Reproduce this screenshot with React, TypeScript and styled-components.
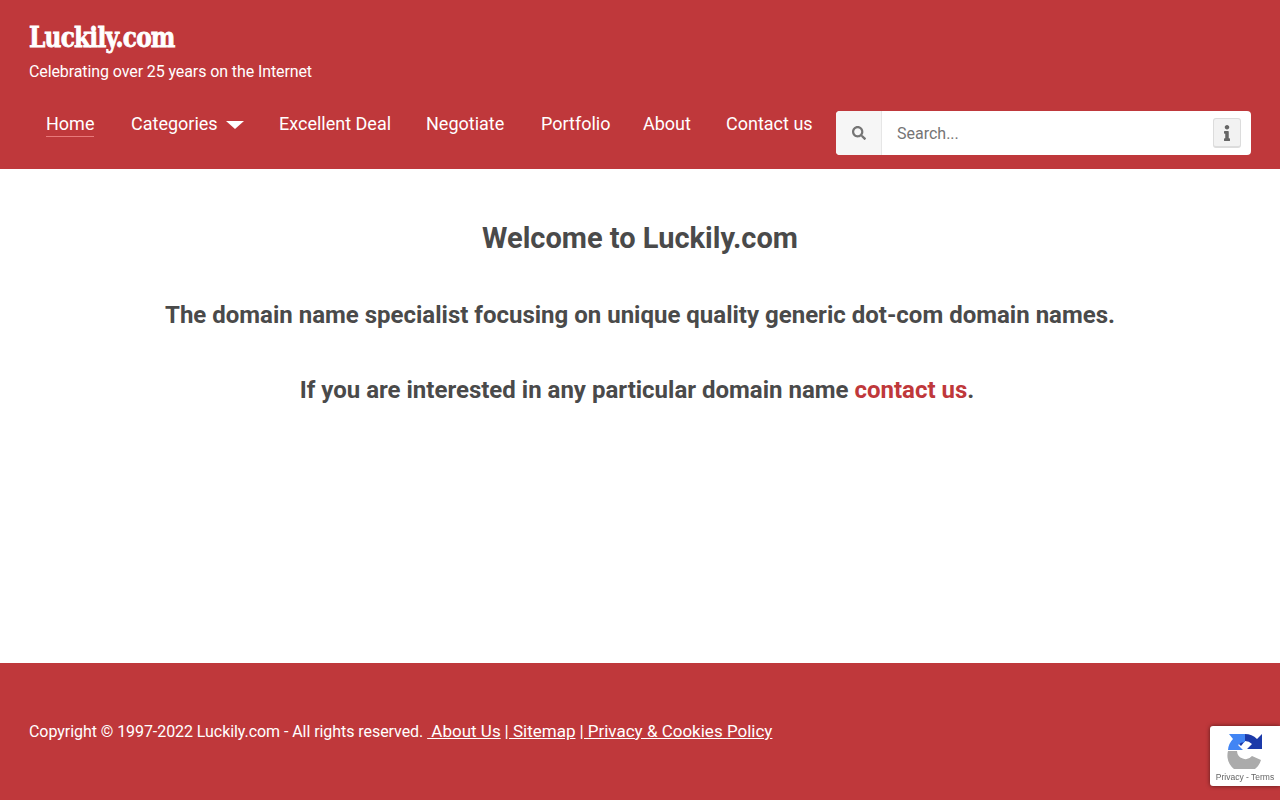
import React from 'react';
import styled, { createGlobalStyle } from 'styled-components';
import { FaSearch, FaInfo } from 'react-icons/fa';

const RED = '#bf383b';

const GlobalStyle = createGlobalStyle`
    html, body {
        margin: 0;
        padding: 0;
        background: #fff;
        font-family: Roboto, 'Liberation Sans', sans-serif;
    }
`;

const Page = styled.div`
    display: flex;
    flex-direction: column;
    height: 800px;
    overflow: hidden;
`;

const Header = styled.header`
    height: 169px;
    box-sizing: border-box;
    background: ${RED};
    color: #fff;
    padding: 20px 29px 0;
`;

const Logo = styled.div`
    font-family: 'DejaVu Serif', serif;
    font-weight: 700;
    font-size: 27px;
    line-height: 36px;
    width: 147px;
    white-space: nowrap;
    letter-spacing: -0.9px;
    -webkit-text-stroke: 0.8px #fff;
    transform: scaleX(0.86);
    transform-origin: left center;
`;

const Tagline = styled.div`
    font-size: 16px;
    line-height: 24px;
    margin-top: 4px;
    letter-spacing: -0.1px;
`;

const NavRow = styled.div`
    display: flex;
    align-items: flex-start;
    margin-top: 17px;
`;

const Nav = styled.nav`
    display: flex;
    width: 807px;
    padding: 11px 0 0 17px;
    box-sizing: border-box;
`;

const NavItem = styled.a<{ $width: number; $active?: boolean }>`
    display: flex;
    align-items: center;
    width: ${p => p.$width}px;
    font-size: 18px;
    line-height: 24px;
    color: #fff;
    white-space: nowrap;

    span {
        border-bottom: 1px solid ${p => (p.$active ? '#e8797a' : 'transparent')};
    }
`;

const Caret = styled.i`
    width: 0;
    height: 0;
    margin-left: 8px;
    border-left: 9px solid transparent;
    border-right: 9px solid transparent;
    border-top: 8px solid #fff;
`;

const SearchBox = styled.div`
    display: flex;
    width: 415px;
    height: 44px;
    margin-top: 10px;
    background: #fff;
    border-radius: 4px;
    overflow: hidden;
`;

const SearchAddon = styled.div`
    display: flex;
    align-items: center;
    justify-content: center;
    width: 45px;
    background: #f6f6f6;
    border-right: 1px solid #e6e6e6;
    color: #757575;
    font-size: 14px;
`;

const SearchField = styled.div`
    flex: 1;
    display: flex;
    align-items: center;
    justify-content: space-between;
    padding: 0 10px 0 15px;
    color: #757575;
    font-size: 16px;
`;

const InfoButton = styled.div`
    display: flex;
    align-items: center;
    justify-content: center;
    width: 28px;
    height: 30px;
    background: #f2f2f2;
    border: 1px solid #dcdcdc;
    border-bottom-width: 2px;
    box-sizing: border-box;
    border-radius: 3px;
    color: #666;
    font-size: 16px;
`;

const Main = styled.main`
    flex: 1;
    padding-top: 50px;
    text-align: center;
    color: #4a4a4a;
    font-weight: 700;
`;

const Title = styled.h1`
    margin: 0;
    font-size: 29px;
    line-height: 38px;
    font-weight: 700;
`;

const Subtitle = styled.h2`
    margin: 41px 0 0;
    font-size: 24px;
    line-height: 34px;
    font-weight: 700;
`;

const RedLink = styled.a`
    color: ${RED};
`;

const Footer = styled.footer`
    height: 137px;
    box-sizing: border-box;
    background: ${RED};
    color: #fff;
    padding: 56px 29px 0;
    font-size: 16px;
    line-height: 24px;
    letter-spacing: -0.06px;
`;

const FooterLink = styled.a`
    font-size: 17px;
    letter-spacing: 0;
    color: #fff;
    text-decoration: underline;
`;

const Recaptcha = styled.div`
    position: fixed;
    right: 0;
    bottom: 14px;
    width: 70px;
    height: 60px;
    display: flex;
    flex-direction: column;
    align-items: center;
    background: #fff;
    border-radius: 3px 0 0 3px;
    box-shadow: 0 0 4px rgba(0, 0, 0, 0.55);
    font-family: 'Liberation Sans', sans-serif;
    font-size: 8.5px;
    line-height: 12px;
    color: #666;
    padding-top: 7px;
    box-sizing: border-box;
    white-space: nowrap;
`;

const RecaptchaLabel = styled.div`
    margin-top: 2px;
`;

const RecaptchaLogo = () => (
    <svg width="36" height="36" viewBox="0 0 36 36">
        <path d="M18 1a17 17 0 0 1 12 5l5-5v15H20l5-5a10 10 0 0 0-7-3l-4 5-3-3z" fill="#1c3aa9" />
        <path d="M1 17A17 17 0 0 1 6 6L2 1h16v8a10 10 0 0 0-7 3l5 5z" fill="#4285f4" />
        <path d="M1 18h9a8.500 8.500 0 0 0 15 5l9 4A17 17 0 0 1 1 18z" fill="#ababab" />
    </svg>
);

const navItems = [
    { label: 'Home', width: 85, active: true },
    { label: 'Categories', width: 148, caret: true },
    { label: 'Excellent Deal', width: 147 },
    { label: 'Negotiate', width: 115 },
    { label: 'Portfolio', width: 102 },
    { label: 'About', width: 83 },
    { label: 'Contact us', width: 86 },
];

export default function App() {
    return (
        <Page>
            <GlobalStyle />
            <Header>
                <Logo>Luckily.com</Logo>
                <Tagline>Celebrating over 25 years on the Internet</Tagline>
                <NavRow>
                    <Nav>
                        {navItems.map(item => (
                            <NavItem key={item.label} $width={item.width} $active={item.active}>
                                <span>{item.label}</span>
                                {item.caret && <Caret />}
                            </NavItem>
                        ))}
                    </Nav>
                    <SearchBox>
                        <SearchAddon>
                            <FaSearch />
                        </SearchAddon>
                        <SearchField>
                            Search...
                            <InfoButton>
                                <FaInfo />
                            </InfoButton>
                        </SearchField>
                    </SearchBox>
                </NavRow>
            </Header>
            <Main>
                <Title>Welcome to Luckily.com</Title>
                <Subtitle>The domain name specialist focusing on unique quality generic dot-com domain names.</Subtitle>
                <Subtitle>
                    If you are interested in any particular domain name <RedLink>contact us</RedLink>.&nbsp;
                </Subtitle>
            </Main>
            <Footer>
                Copyright © 1997-2022 Luckily.com - All rights reserved.{' '}
                <FooterLink>&nbsp;About Us</FooterLink> <FooterLink>| Sitemap</FooterLink>{' '}
                <FooterLink>| Privacy &amp; Cookies Policy</FooterLink>
            </Footer>
            <Recaptcha>
                <RecaptchaLogo />
                <RecaptchaLabel>Privacy - Terms</RecaptchaLabel>
            </Recaptcha>
        </Page>
    );
}
